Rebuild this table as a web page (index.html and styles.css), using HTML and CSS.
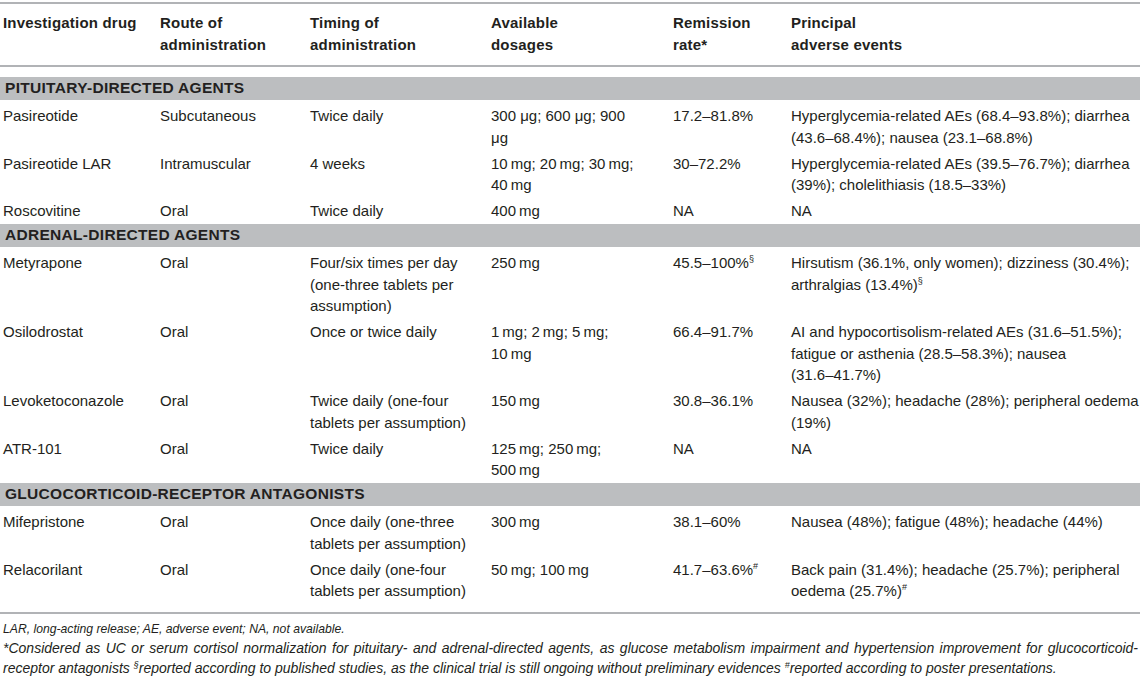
FILE: index.html
```html
<!DOCTYPE html>
<html lang="en">
<head>
<meta charset="utf-8">
<title>Investigation drugs table</title>
<link rel="stylesheet" href="styles.css">
</head>
<body>
<div class="page">
  <div class="tbl">
    <div class="row head">
      <div class="cell">Investigation drug</div>
      <div class="cell">Route of<br>administration</div>
      <div class="cell">Timing of<br>administration</div>
      <div class="cell">Available<br>dosages</div>
      <div class="cell">Remission<br>rate*</div>
      <div class="cell">Principal<br>adverse events</div>
    </div>

    <div class="band first">PITUITARY-DIRECTED AGENTS</div>
    <div class="row">
      <div class="cell">Pasireotide</div>
      <div class="cell">Subcutaneous</div>
      <div class="cell">Twice daily</div>
      <div class="cell">300 μg; 600 μg; 900<br>μg</div>
      <div class="cell">17.2–81.8%</div>
      <div class="cell">Hyperglycemia-related AEs (68.4–93.8%); diarrhea<br>(43.6–68.4%); nausea (23.1–68.8%)</div>
    </div>
    <div class="row">
      <div class="cell">Pasireotide LAR</div>
      <div class="cell">Intramuscular</div>
      <div class="cell">4 weeks</div>
      <div class="cell">10&#8201;mg; 20&#8201;mg; 30&#8201;mg;<br>40&#8201;mg</div>
      <div class="cell">30–72.2%</div>
      <div class="cell">Hyperglycemia-related AEs (39.5–76.7%); diarrhea<br>(39%); cholelithiasis (18.5–33%)</div>
    </div>
    <div class="row">
      <div class="cell">Roscovitine</div>
      <div class="cell">Oral</div>
      <div class="cell">Twice daily</div>
      <div class="cell">400&#8201;mg</div>
      <div class="cell">NA</div>
      <div class="cell">NA</div>
    </div>

    <div class="band">ADRENAL-DIRECTED AGENTS</div>
    <div class="row">
      <div class="cell">Metyrapone</div>
      <div class="cell">Oral</div>
      <div class="cell">Four/six times per day<br>(one-three tablets per<br>assumption)</div>
      <div class="cell">250&#8201;mg</div>
      <div class="cell">45.5–100%<sup>§</sup></div>
      <div class="cell">Hirsutism (36.1%, only women); dizziness (30.4%);<br>arthralgias (13.4%)<sup>§</sup></div>
    </div>
    <div class="row">
      <div class="cell">Osilodrostat</div>
      <div class="cell">Oral</div>
      <div class="cell">Once or twice daily</div>
      <div class="cell">1&#8201;mg; 2&#8201;mg; 5&#8201;mg;<br>10&#8201;mg</div>
      <div class="cell">66.4–91.7%</div>
      <div class="cell">AI and hypocortisolism-related AEs (31.6–51.5%);<br>fatigue or asthenia (28.5–58.3%); nausea<br>(31.6–41.7%)</div>
    </div>
    <div class="row">
      <div class="cell">Levoketoconazole</div>
      <div class="cell">Oral</div>
      <div class="cell">Twice daily (one-four<br>tablets per assumption)</div>
      <div class="cell">150&#8201;mg</div>
      <div class="cell">30.8–36.1%</div>
      <div class="cell">Nausea (32%); headache (28%); peripheral oedema<br>(19%)</div>
    </div>
    <div class="row">
      <div class="cell">ATR-101</div>
      <div class="cell">Oral</div>
      <div class="cell">Twice daily</div>
      <div class="cell">125&#8201;mg; 250&#8201;mg;<br>500&#8201;mg</div>
      <div class="cell">NA</div>
      <div class="cell">NA</div>
    </div>

    <div class="band">GLUCOCORTICOID-RECEPTOR ANTAGONISTS</div>
    <div class="row">
      <div class="cell">Mifepristone</div>
      <div class="cell">Oral</div>
      <div class="cell">Once daily (one-three<br>tablets per assumption)</div>
      <div class="cell">300&#8201;mg</div>
      <div class="cell">38.1–60%</div>
      <div class="cell">Nausea (48%); fatigue (48%); headache (44%)</div>
    </div>
    <div class="row last">
      <div class="cell">Relacorilant</div>
      <div class="cell">Oral</div>
      <div class="cell">Once daily (one-four<br>tablets per assumption)</div>
      <div class="cell">50&#8201;mg; 100&#8201;mg</div>
      <div class="cell">41.7–63.6%<sup>#</sup></div>
      <div class="cell">Back pain (31.4%); headache (25.7%); peripheral<br>oedema (25.7%)<sup>#</sup></div>
    </div>
  </div>

  <div class="notes">
    <p class="note small">LAR, long-acting release; AE, adverse event; NA, not available.</p>
    <p class="note">
      <span class="line justified">*Considered as UC or serum cortisol normalization for pituitary- and adrenal-directed agents, as glucose metabolism impairment and hypertension improvement for glucocorticoid-</span>
      <span class="line">receptor antagonists <sup>§</sup>reported according to published studies, as the clinical trial is still ongoing without preliminary evidences <sup>#</sup>reported according to poster presentations.</span>
    </p>
  </div>
</div>
</body>
</html>
```

FILE: styles.css
```css
html, body {
  margin: 0;
  padding: 0;
  background: #ffffff;
}

.page {
  width: 1143px;
  padding-top: 2px;
  font-family: "Liberation Sans", Arial, sans-serif;
  color: #231f20;
}

.tbl {
  width: 1140px;
  border-top: 2px solid #b1b3b6;
  border-bottom: 2px solid #b1b3b6;
}

.row {
  display: grid;
  grid-template-columns: 157px 150px 181px 182px 118px 1fr;
  font-size: 15px;
  line-height: 21.5px;
  padding: 2px 0 2.5px;
}

.row.last {
  padding-bottom: 10px;
}

.cell {
  padding-left: 3px;
  white-space: nowrap;
}

.head {
  font-weight: bold;
  letter-spacing: 0.2px;
  padding: 8px 0 10px;
  border-bottom: 2px solid #b1b3b6;
  margin-bottom: 10px;
}

.band {
  background: #bcbec0;
  font-size: 15.5px;
  font-weight: bold;
  letter-spacing: 0.3px;
  line-height: 22.5px;
  padding-left: 5px;
  margin-bottom: 3.5px;
}

sup {
  font-size: 9px;
  line-height: 0;
  vertical-align: 6px;
}

.notes {
  width: 1135px;
  margin-top: 6px;
  font-size: 14px;
  line-height: 19.5px;
  font-style: italic;
  padding-left: 3px;
}

.note {
  margin: 0;
}

.note.small {
  font-size: 12.2px;
}

.line {
  display: block;
  white-space: nowrap;
}

.line.justified {
  white-space: normal;
  text-align: justify;
  text-align-last: justify;
}

.notes sup {
  font-size: 9px;
  vertical-align: 5px;
}
```
